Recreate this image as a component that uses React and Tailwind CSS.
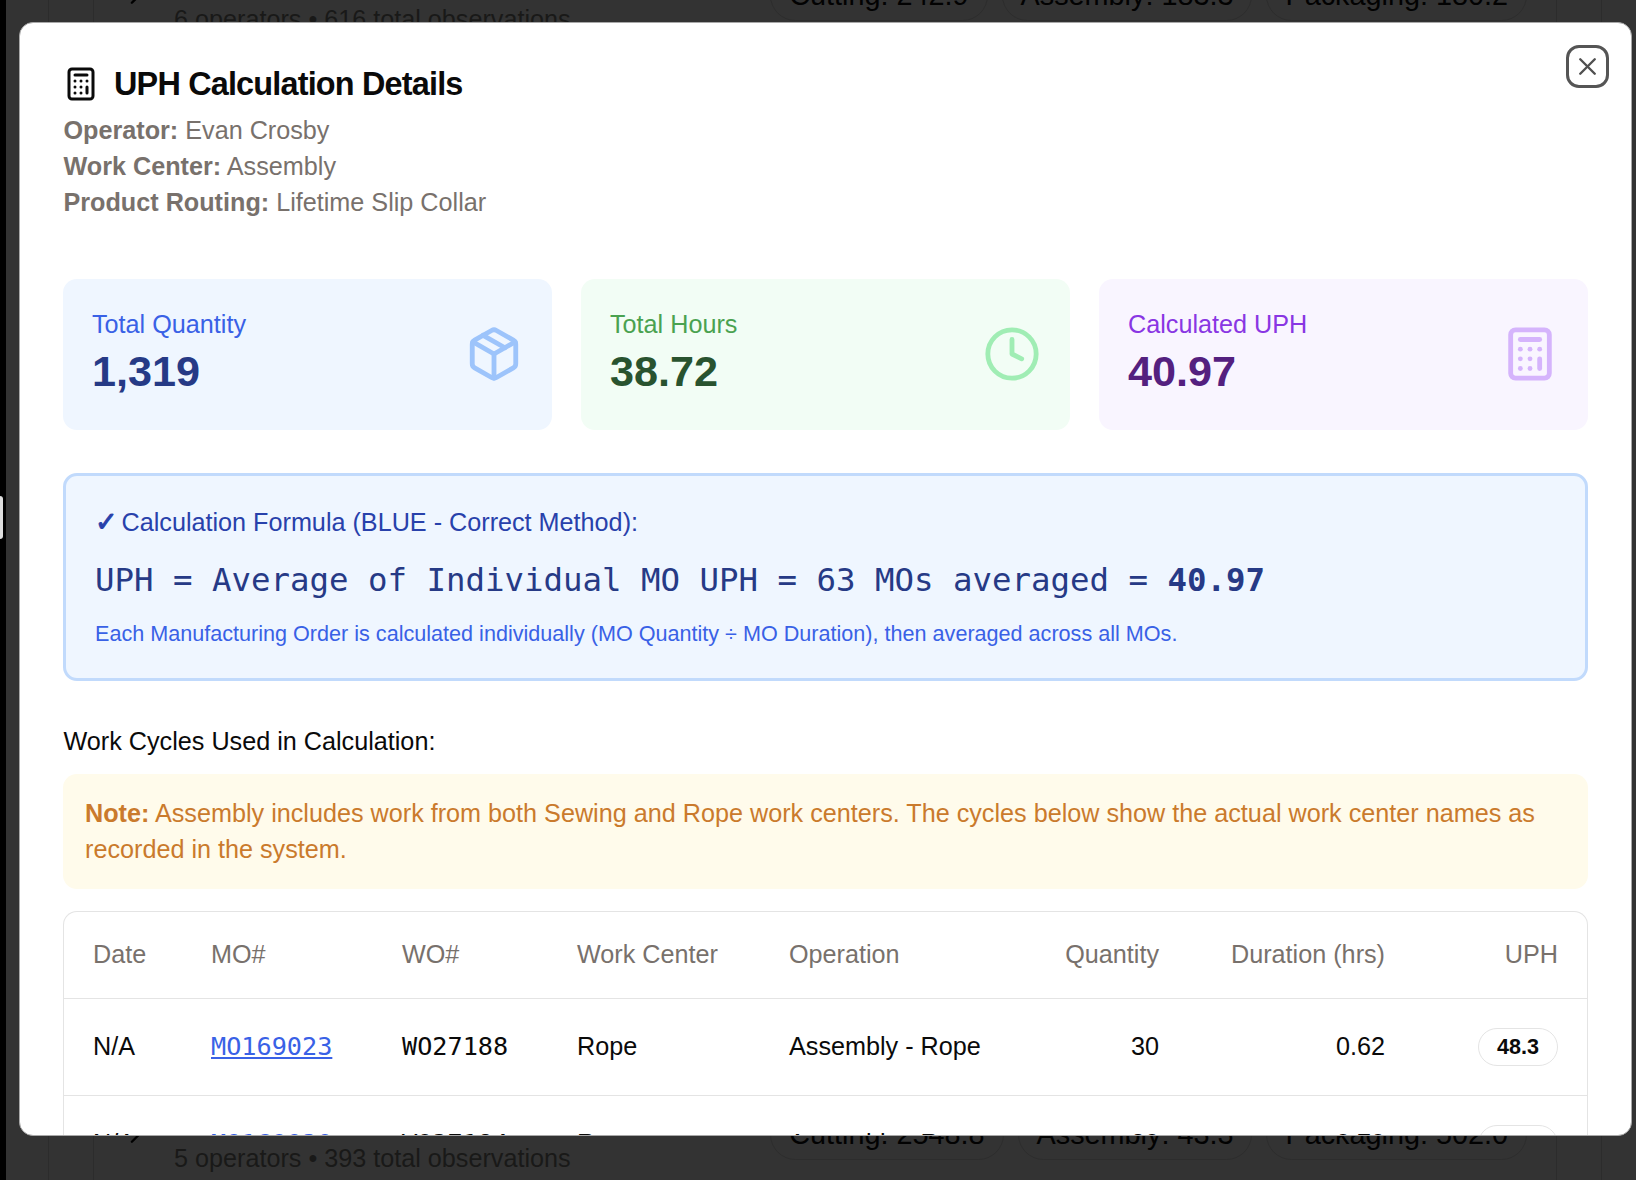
import { Calculator, Package, Clock, X, ChevronRight } from "lucide-react";

const stats = [
  { label: "Total Quantity", value: "1,319", Icon: Package, box: "bg-[#eff6ff]", labelColor: "text-[#3961e6]", valueColor: "text-[#263a86]", icon: "text-[#9dc4fb]" },
  { label: "Total Hours", value: "38.72", Icon: Clock, box: "bg-[#f2fdf5]", labelColor: "text-[#4aa250]", valueColor: "text-[#29532f]", icon: "text-[#a0edb4]" },
  { label: "Calculated UPH", value: "40.97", Icon: Calculator, box: "bg-[#f9f5ff]", labelColor: "text-[#8936e3]", valueColor: "text-[#54207f]", icon: "text-[#d5b4fc]" },
];

const cycles = [
  { date: "N/A", mo: "MO169023", wo: "WO27188", center: "Rope", op: "Assembly - Rope", qty: "30", hrs: "0.62", uph: "48.3" },
  { date: "N/A", mo: "MO169020", wo: "WO27184", center: "Rope", op: "Assembly - Rope", qty: "30", hrs: "0.70", uph: "42.9" },
];

const columns = "grid grid-cols-[118px_191px_175px_212px_242px_186px_226px_173px] items-center";

function BackgroundCard({ summary, rates, className }) {
  return (
    <div className={"mx-[44px] flex h-[180px] justify-between border-x border-[#2c2c2c] pl-[27px] pr-[29px] " + className}>
      <div className="flex">
        <ChevronRight className="mt-[58px] size-[29px] text-black" />
        <div className="ml-[24px] mt-[78px] text-[25.2px] leading-[36px] text-[#191918]">{summary}</div>
      </div>
      <div className="mt-[47px] flex items-start gap-[14px]">
        {rates.map((r) => (
          <span key={r} className="whitespace-nowrap rounded-full border border-[#2d2d2d] px-[18px] py-[3px] text-[28.8px] leading-[43px] text-[#020202]">{r}</span>
        ))}
      </div>
    </div>
  );
}

function Dialog() {
  return (
    <div className="absolute left-[19px] top-[22px] h-[1114px] w-[1613px] overflow-hidden rounded-[14px] border border-[#a8a8a8] bg-white px-[43px] pt-[43px]">
      <button className="absolute right-[22px] top-[22px] flex size-[43px] items-center justify-center rounded-[13px] border-[3px] border-[#555555]" aria-label="Close">
        <X className="size-[29px] text-[#505050]" strokeWidth={2} />
      </button>

      <div className="flex h-[36px] items-center gap-[15px]">
        <Calculator className="size-[36px] text-[#0a0a0a]" />
        <h2 className="text-[32.4px] font-bold leading-[36px] tracking-[-0.81px]">UPH Calculation Details</h2>
      </div>
      <div className="mt-[10px] pl-[0.5px] text-[25.2px] leading-[36px] text-[#78716c]">
        <p><strong>Operator:</strong> Evan Crosby</p>
        <p><strong>Work Center:</strong> Assembly</p>
        <p><strong>Product Routing:</strong> Lifetime Slip Collar</p>
      </div>

      <div className="mt-[59px] grid grid-cols-3 gap-[29px]">
        {stats.map(({ label, value, Icon, box, labelColor, valueColor, icon }) => (
          <div key={label} className={"flex h-[151px] items-center justify-between rounded-[14px] px-[29px] pb-[3px] " + box}>
            <div>
              <p className={"text-[25.2px] leading-[36px] " + labelColor}>{label}</p>
              <p className={"text-[43.2px] font-bold leading-[58px] " + valueColor}>{value}</p>
            </div>
            <Icon className={"mt-[2px] size-[58px] " + icon} />
          </div>
        ))}
      </div>

      <div className="mt-[43px] h-[208px] rounded-[14px] border-[3px] border-[#c1dafc] bg-[#eff6ff] px-[29px] pt-[28px]">
        <p className="flex items-center text-[25.2px] leading-[36px] text-[#2841ab]">
          <span className="w-[26.5px] font-['DejaVu_Sans'] text-[27px] font-bold [-webkit-text-stroke:1px_#2841ab]">✓</span>
          <span>Calculation Formula (BLUE - Correct Method):</span>
        </p>
        <p className="mt-[15px] font-['DejaVu_Sans_Mono',monospace] text-[32.4px] leading-[50px] text-[#263a86]">
          UPH = Average of Individual MO UPH = 63 MOs averaged = <strong>40.97</strong>
        </p>
        <p className="mt-[14px] text-[21.6px] leading-[29px] text-[#3961e6]">
          Each Manufacturing Order is calculated individually (MO Quantity ÷ MO Duration), then averaged across all MOs.
        </p>
      </div>

      <h3 className="mt-[42px] pl-[0.5px] text-[25.2px] leading-[36px]">Work Cycles Used in Calculation:</h3>
      <div className="mt-[15px] rounded-[14px] bg-[#fffbeb] px-[22px] pt-[20.5px] pb-[22.5px] text-[25.2px] leading-[36px] text-[#ca7a2c]">
        <strong>Note:</strong> Assembly includes work from both Sewing and Rope work centers. The cycles below show the actual work center names as recorded in the system.
      </div>

      <div className="mt-[22px] rounded-t-[14px] border border-b-0 border-[#e4e4e4] text-[25.2px] leading-[36px]">
        <div className={"h-[87px] border-b border-[#e4e4e4] pb-[2px] text-[#78716c] " + columns}>
          <span className="pl-[29px]">Date</span>
          <span className="pl-[29px]">MO#</span>
          <span className="pl-[29px]">WO#</span>
          <span className="pl-[29px]">Work Center</span>
          <span className="pl-[29px]">Operation</span>
          <span className="pr-[29px] text-right">Quantity</span>
          <span className="pr-[29px] text-right">Duration (hrs)</span>
          <span className="pr-[29px] text-right">UPH</span>
        </div>
        {cycles.map((c) => (
          <div key={c.mo} className={"h-[97px] border-b border-[#e4e4e4] " + columns}>
            <span className="pb-[2px] pl-[29px]">{c.date}</span>
            <span className="pl-[29px] font-['DejaVu_Sans_Mono',monospace] text-[#3961e6] underline">{c.mo}</span>
            <span className="pl-[29px] font-['DejaVu_Sans_Mono',monospace]">{c.wo}</span>
            <span className="pb-[2px] pl-[29px]">{c.center}</span>
            <span className="pb-[2px] pl-[29px]">{c.op}</span>
            <span className="pr-[29px] pb-[2px] text-right">{c.qty}</span>
            <span className="pr-[29px] pb-[2px] text-right">{c.hrs}</span>
            <span className="flex justify-end pr-[29px]">
              <span className="rounded-full border border-[#e4e4e4] px-[18px] pt-[3px] pb-[4px] text-[21.6px] font-bold leading-[29px]">{c.uph}</span>
            </span>
          </div>
        ))}
      </div>
    </div>
  );
}

export default function App() {
  return (
    <div className="relative flex h-[1180px] w-[1636px] overflow-hidden bg-[#333333] font-['Liberation_Sans',Arial,sans-serif] text-[#0a0a0a]">
      <div className="w-[6px] shrink-0 bg-black">
        <div className="mt-[496px] h-[43px] w-[3px] rounded-r bg-[#dddddd]" />
      </div>
      <div className="mr-[34px] ml-[42px] min-w-0 flex-1 border-x border-[#2c2c2c]">
        <BackgroundCard className="-mt-[77px]" summary="6 operators • 616 total observations" rates={["Cutting: 242.9", "Assembly: 183.3", "Packaging: 180.2"]} />
        <BackgroundCard className="mt-[959px]" summary="5 operators • 393 total observations" rates={["Cutting: 2548.8", "Assembly: 43.3", "Packaging: 502.0"]} />
      </div>
      <Dialog />
    </div>
  );
}
